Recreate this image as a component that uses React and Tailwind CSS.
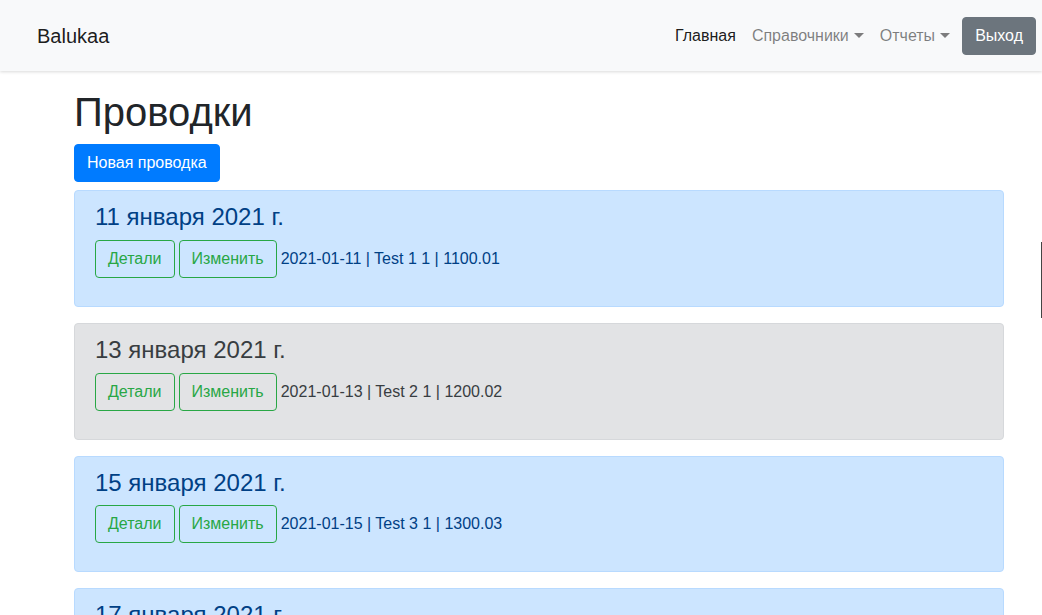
const entries = [
  { title: "11 января 2021 г.", line: "2021-01-11 | Test 1 1 | 1100.01", tone: "primary" },
  { title: "13 января 2021 г.", line: "2021-01-13 | Test 2 1 | 1200.02", tone: "secondary" },
  { title: "15 января 2021 г.", line: "2021-01-15 | Test 3 1 | 1300.03", tone: "primary" },
  { title: "17 января 2021 г.", line: "2021-01-17 | Test 4 1 | 1400.04", tone: "primary" },
];

const toneClasses = {
  primary: "bg-[#cce5ff] border-[#b8daff] text-[#004085]",
  secondary: "bg-[#e2e3e5] border-[#d6d8db] text-[#383d41]",
};

const Caret = () => (
  <span className="ml-[5px] inline-block align-[3px] border-t-[5px] border-x-[5px] border-x-transparent border-t-current" />
);

const Navbar = () => (
  <nav className="flex h-[71px] items-center justify-between bg-[#f8f9fa] pl-[37px] pr-[6px] shadow-[0_1px_3px_rgba(0,0,0,0.15)] relative z-10">
    <a className="text-[20px] leading-[30px] text-black/90">Balukaa</a>
    <div className="flex items-center">
      <ul className="flex items-center text-base leading-6">
        <li className="px-2 py-2 text-black/90">Главная</li>
        <li className="px-2 py-2 text-black/50">
          Справочники
          <Caret />
        </li>
        <li className="px-2 py-2 text-black/50">
          Отчеты
          <Caret />
        </li>
      </ul>
      <button className="ml-[4px] rounded bg-[#6c757d] px-3 py-[6px] text-base leading-6 text-white border border-[#6c757d]">
        Выход
      </button>
    </div>
  </nav>
);

const EntryCard = ({ entry }) => (
  <div className={`mb-4 rounded border px-5 py-3 ${toneClasses[entry.tone]}`}>
    <h4 className="mb-2 text-[24px] leading-[28.8px] font-normal">{entry.title}</h4>
    <p className="mb-4 flex items-center gap-1 text-base leading-6">
      <button className="rounded border border-[#28a745] px-3 py-[6px] text-[#28a745]">Детали</button>
      <button className="rounded border border-[#28a745] px-3 py-[6px] text-[#28a745]">Изменить</button>
      <span>{entry.line}</span>
    </p>
  </div>
);

export default function App() {
  return (
    <div className="h-[615px] overflow-hidden bg-white text-[#212529] font-['Liberation_Sans','Helvetica_Neue',Arial,sans-serif]">
      <Navbar />
      <main className="ml-[74px] w-[930px] pt-[17px]">
        <h1 className="mb-2 text-[40px] leading-[48px] font-normal">Проводки</h1>
        <button className="mb-2 rounded border border-[#007bff] bg-[#007bff] px-3 py-[6px] text-base leading-6 text-white">
          Новая проводка
        </button>
        {entries.map((entry) => (
          <EntryCard key={entry.title} entry={entry} />
        ))}
      </main>
      <div className="fixed right-0 top-[242px] h-[76px] w-px bg-[#444]" />
    </div>
  );
}
